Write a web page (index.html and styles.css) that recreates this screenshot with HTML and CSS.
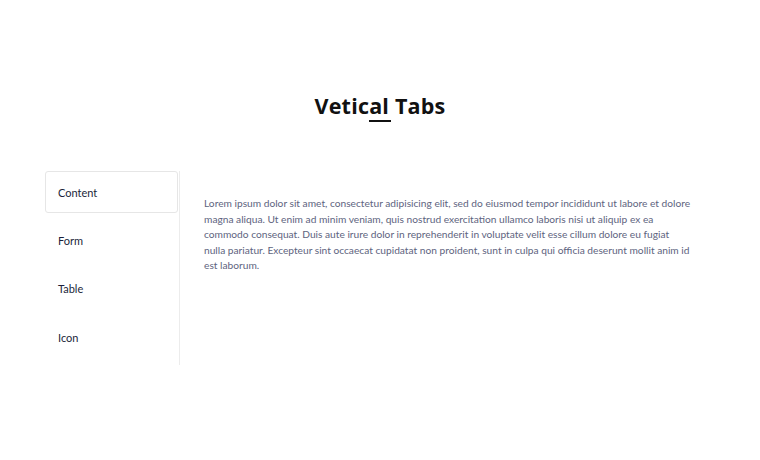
FILE: index.html
```html
<!DOCTYPE html>
<html>
<head>
<meta charset="utf-8">
<link rel="stylesheet" href="styles.css">
</head>
<body>
<div class="page">
  <header class="head">
    <h1 class="title">Vetical Tabs</h1>
    <div class="rule"></div>
  </header>
  <section class="tabs">
    <nav class="nav">
      <div class="tab active">Content</div>
      <div class="tab">Form</div>
      <div class="tab">Table</div>
      <div class="tab">Icon</div>
    </nav>
    <div class="panel">
      <p class="text">Lorem ipsum dolor sit amet, consectetur adipisicing elit, sed do eiusmod tempor incididunt ut labore et dolore magna aliqua. Ut enim ad minim veniam, quis nostrud exercitation ullamco laboris nisi ut aliquip ex ea commodo consequat. Duis aute irure dolor in reprehenderit in voluptate velit esse cillum dolore eu fugiat nulla pariatur. Excepteur sint occaecat cupidatat non proident, sunt in culpa qui officia deserunt mollit anim id est laborum.</p>
    </div>
  </section>
</div>
</body>
</html>
```
FILE: styles.css
```css
html, body {
  margin: 0;
  padding: 0;
  background: #fff;
}
.page {
  width: 760px;
  height: 460px;
  font-family: Lato, "Open Sans", sans-serif;
}
.head {
  padding-top: 92px;
  display: flex;
  flex-direction: column;
  align-items: center;
}
.title {
  margin: 0;
  font-family: "Open Sans", "Noto Sans", sans-serif;
  font-weight: 700;
  font-size: 21.5px;
  line-height: 27px;
  color: #111;
  letter-spacing: 0.2px;
}
.rule {
  width: 22px;
  height: 2px;
  background: #111;
  margin-top: 1px;
}
.tabs {
  display: flex;
  margin-top: 49px;
  padding-left: 45px;
}
.nav {
  width: 134px;
  border-right: 1px solid #ececec;
  display: flex;
  flex-direction: column;
  gap: 6.4px;
  padding-bottom: 7px;
}
.tab {
  height: 42px;
  box-sizing: border-box;
  display: flex;
  align-items: center;
  padding-left: 12px;
  font-size: 11px;
  color: #1b1f3a;
  border: 1px solid transparent;
  border-radius: 3px;
}
.tab.active {
  border-color: #e6e6e6;
  margin-right: 1px;
}
.panel {
  padding-left: 24px;
  padding-top: 25px;
  width: 487.5px;
}
.text {
  margin: 0;
  font-size: 10.2px;
  line-height: 15.5px;
  color: #5e6480;
}
```
